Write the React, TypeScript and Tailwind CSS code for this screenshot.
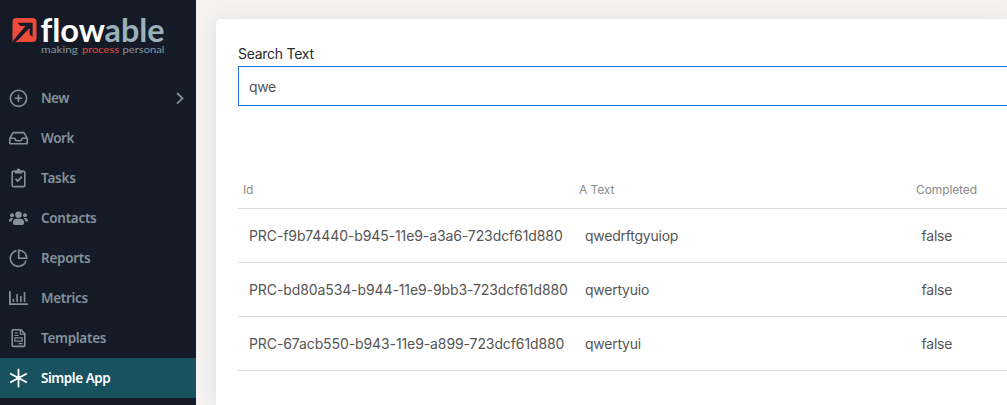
import React from "react";

type IconName = "new" | "work" | "tasks" | "contacts" | "reports" | "metrics" | "templates" | "app";

const stroke = { fill: "none", stroke: "currentColor", strokeWidth: 1.6 } as const;

const icons: Record<IconName, React.ReactNode> = {
  new: (
    <g {...stroke}>
      <circle cx="10" cy="10.3" r="8.1" />
      <path d="M10 6.5v7.6M6.2 10.3h7.6" />
    </g>
  ),
  work: (
    <g {...stroke} strokeLinejoin="round">
      <path d="M1.3 10.3 4.6 4.6h10.8l3.3 5.7v5.4H1.3z" />
      <path d="M1.3 10.3h5l1.2 2.4h5l1.2-2.4h5" />
    </g>
  ),
  tasks: (
    <g {...stroke}>
      <rect x="3.7" y="3.4" width="12.6" height="15.2" rx="1" />
      <path d="M7 10.8l2.3 2.3 4-4.4" strokeWidth="1.8" />
      <path d="M6.4 2.4h1.8a1.8 1.8 0 0 1 3.6 0h1.8v3H6.4z" fill="currentColor" stroke="none" />
    </g>
  ),
  contacts: (
    <g fill="currentColor">
      <circle cx="10" cy="6.8" r="3.2" />
      <circle cx="3.5" cy="7.2" r="2" />
      <circle cx="16.5" cy="7.2" r="2" />
      <path d="M4.4 14.6c0-2.4 1.5-3.9 3.5-3.9h4.2c2 0 3.5 1.5 3.5 3.9 0 1.4-.6 2.3-1.7 2.3H6.1c-1.1 0-1.7-.9-1.7-2.3z" />
      <path d="M.5 13.4c0-2.4.9-3.4 2.7-3.4h1.7c-1 .9-1.6 2-1.7 3.4H.5zM19.5 13.4c0-2.4-.9-3.4-2.7-3.4h-1.7c1 .9 1.6 2 1.7 3.4h2.7z" />
    </g>
  ),
  reports: (
    <g {...stroke}>
      <path d="M8 2.6A8 8 0 1 0 17.5 12.6" />
      <path d="M10.2 2.2v8H18.2A8 8 0 0 0 10.2 2.2z" />
    </g>
  ),
  metrics: (
    <g {...stroke}>
      <path d="M1.4 3v13.2h18" strokeWidth="1.8" />
      <path d="M4.9 14v-3.2M8.6 14V6M12.3 14V8M16 14V4" />
    </g>
  ),
  templates: (
    <g {...stroke}>
      <path d="M4.5 1.7h7.8l4 4v11.7a1 1 0 0 1-1 1H4.7a1 1 0 0 1-1-1V2.7a1 1 0 0 1 .8-1z" />
      <path d="M11.8 1.8v4.4h4.3M6 5h3.5M6 7.5h4M10 15.7h4" strokeWidth="1.2" />
      <path d="M6.3 9.9h7.4v3.3H6.3z" strokeWidth="1.2" />
    </g>
  ),
  app: <path {...stroke} d="M10 .8v18.4M1.6 5.5l16.8 9M18.4 5.5l-16.8 9" strokeWidth="1.8" />,
};

const items: { icon: IconName; label: string; tracking: string }[] = [
  { icon: "new", label: "New", tracking: "tracking-[-0.6px]" },
  { icon: "work", label: "Work", tracking: "tracking-[-0.4px]" },
  { icon: "tasks", label: "Tasks", tracking: "tracking-[-0.2px]" },
  { icon: "contacts", label: "Contacts", tracking: "tracking-[-0.3px]" },
  { icon: "reports", label: "Reports", tracking: "tracking-[-0.3px]" },
  { icon: "metrics", label: "Metrics", tracking: "tracking-[-0.3px]" },
  { icon: "templates", label: "Templates", tracking: "tracking-[-0.3px]" },
  { icon: "app", label: "Simple App", tracking: "tracking-[-0.45px]" },
];

const rows = [
  { id: "PRC-f9b74440-b945-11e9-a3a6-723dcf61d880", text: "qwedrftgyuiop", completed: "false" },
  { id: "PRC-bd80a534-b944-11e9-9bb3-723dcf61d880", text: "qwertyuio", completed: "false" },
  { id: "PRC-67acb550-b943-11e9-a899-723dcf61d880", text: "qwertyui", completed: "false" },
];

function Logo() {
  return (
    <svg width="196" height="78" viewBox="0 0 196 78" className="shrink-0" role="img" aria-label="Flowable">
      <path d="M16.5 18H32.5a4 4 0 0 1 4 4V38a4 4 0 0 1-4 4H16L12.5 43V22a4 4 0 0 1 4-4z" fill="#ef4b3b" />
      <path d="M17.5 22.7H32.6V37L29.6 34.2V28L19 39 13.5 43.5 12 42 25.500 26H20.500z" fill="#141b27" />
      <g fontFamily="Lato, sans-serif" fontWeight="700" fontSize="32" className="[font-variant-ligatures:none]">
        <text x="40.5" y="42" textLength="64.5" lengthAdjust="spacingAndGlyphs" fill="#fff">flow</text>
        <text x="104.5" y="42" textLength="60" lengthAdjust="spacingAndGlyphs" fill="#9ab1b9">able</text>
      </g>
      <g fontFamily="Lato, sans-serif" fontSize="10">
        <text x="41" y="53" textLength="37" lengthAdjust="spacingAndGlyphs" fill="#8496a1">making</text>
        <text x="82" y="53" textLength="37" lengthAdjust="spacingAndGlyphs" fill="#e04a40">process</text>
        <text x="122.5" y="53" textLength="42" lengthAdjust="spacingAndGlyphs" fill="#8496a1">personal</text>
      </g>
    </svg>
  );
}

function Sidebar() {
  return (
    <aside className="flex w-[196px] shrink-0 flex-col bg-[#141b27]">
      <Logo />
      <nav className="flex flex-col">
        {items.map((item) => (
          <a
            key={item.label}
            className={`flex h-10 items-center pl-2 pr-[10px] ${item.icon === "app" ? "bg-[#18525f] text-white" : "text-[#84909a]"}`}
          >
            <svg width="21" height="20" viewBox="-.5 0 21 20" className="shrink-0">{icons[item.icon]}</svg>
            <span className={`ml-3 flex-1 whitespace-nowrap font-['Noto_Sans',sans-serif] text-[13.5px] font-semibold leading-5 ${item.tracking}`}>
              {item.label}
            </span>
            {item.icon === "new" && (
              <svg width="12" height="14" viewBox="0 0 12 14" className="shrink-0">
                <path d="M3 2l5.5 5.3-5.5 5.3" fill="none" stroke="currentColor" strokeWidth="1.8" />
              </svg>
            )}
          </a>
        ))}
      </nav>
    </aside>
  );
}

export default function App() {
  return (
    <div className="flex h-[405px] w-[1007px] overflow-hidden bg-[#f4f3f1] font-['Inter',sans-serif] text-[14px] text-[#555]">
      <Sidebar />
      <main className="flex min-w-0 flex-1 pl-5 pt-[19px]">
        <section className="min-w-0 flex-1 rounded-tl-[5px] bg-white pl-[22px] pt-[25px] shadow-[0_0_20px_rgba(0,0,0,0.08)]">
          <label className="block h-[22px] leading-5 tracking-[-0.27px] text-[#2b2b2b]">Search Text</label>
          <div className="flex h-10 items-center border border-r-0 border-[#2672dc] pl-[10px] tracking-[-0.4px]">qwe</div>
          <div className="mt-[65px]">
            <div className="grid h-[38px] grid-cols-[336px_337px_1fr] border-b border-[#dcdcdc] pl-[5px] pt-[9px] text-[12px] leading-5 tracking-[-0.1px] text-[#8b8b8b]">
              <span>Id</span>
              <span>A Text</span>
              <span>Completed</span>
            </div>
            {rows.map((row) => (
              <div key={row.id} className="grid h-[54px] grid-cols-[336px_336.5px_1fr] items-center border-b border-[#dcdcdc] pl-[11px]">
                <span className="whitespace-nowrap tracking-[-0.1px]">{row.id}</span>
                <span className="tracking-[-0.24px]">{row.text}</span>
                <span className="tracking-[-0.2px]">{row.completed}</span>
              </div>
            ))}
          </div>
        </section>
      </main>
    </div>
  );
}
